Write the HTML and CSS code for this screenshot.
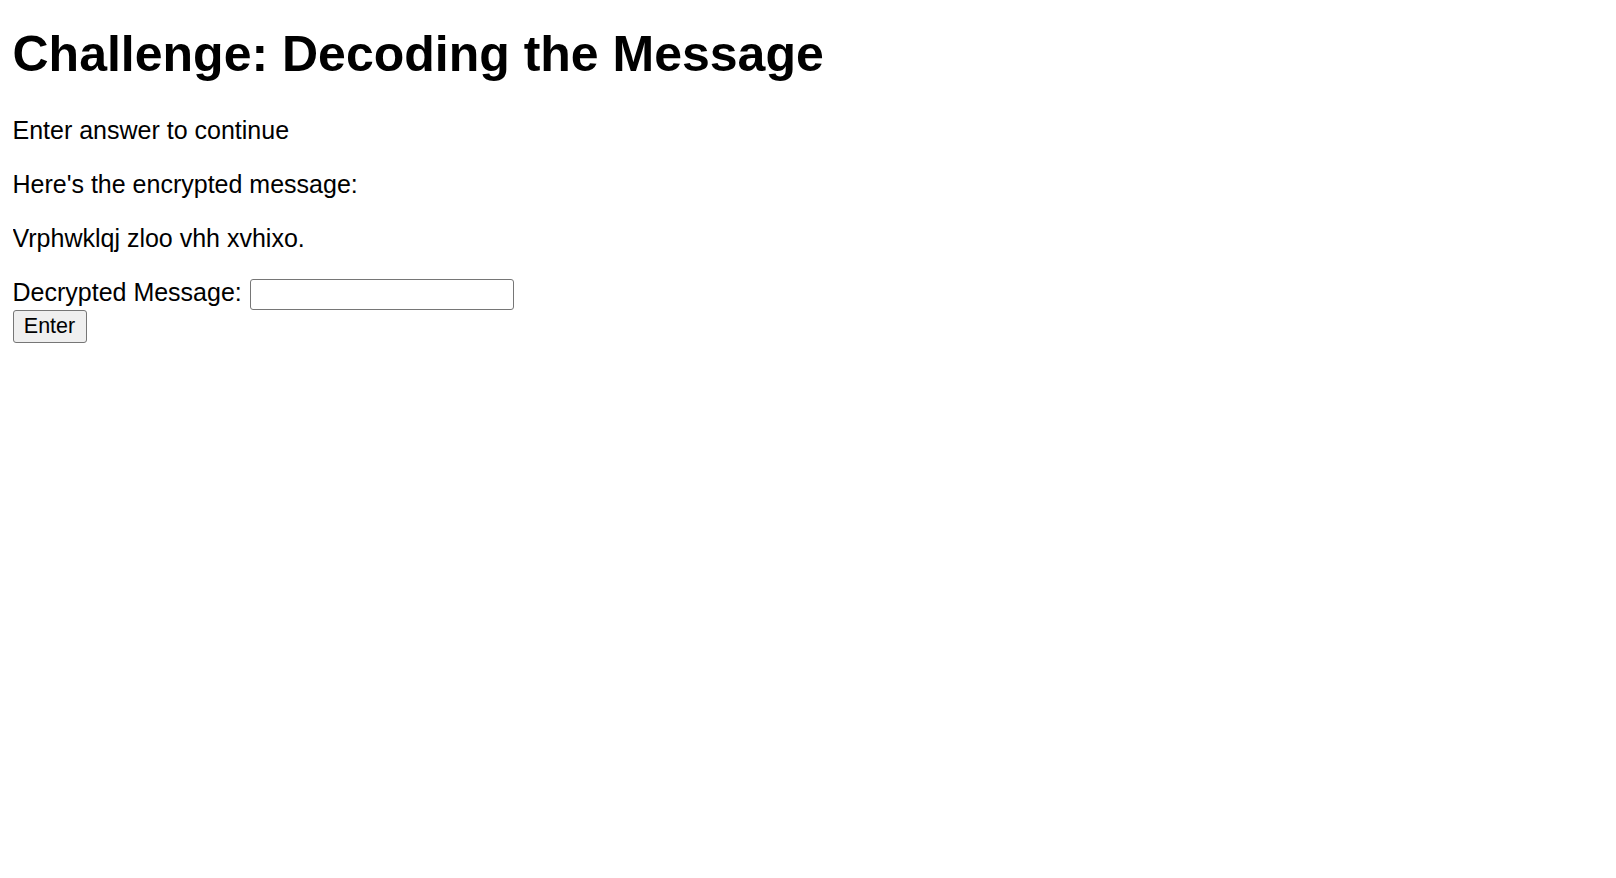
FILE: index.html
```html
<!DOCTYPE html>
<html lang="en">
<head>
<meta charset="utf-8">
<title>Challenge: Decoding the Message</title>
<link rel="stylesheet" href="styles.css">
</head>
<body class="page">
<h1 class="title">Challenge: Decoding the Message</h1>
<p class="text">Enter answer to continue</p>
<p class="text">Here's the encrypted message:</p>
<p class="text">Vrphwklqj zloo vhh xvhixo.</p>
<form class="form">
<label class="label" for="answer">Decrypted Message:</label>
<input class="field" type="text" id="answer" name="answer"><br>
<button class="btn" type="submit">Enter</button>
</form>
</body>
</html>
```
FILE: styles.css
```css
html { background: #fff; }
.page {
  margin: 12.5px;
  font-family: "Liberation Sans", Arial, sans-serif;
  font-size: 25px;
  color: #000;
}
.title {
  font-size: 50px;
  font-weight: bold;
  margin: 0 0 33px;
  padding-top: 12.5px;
}
.text {
  margin: 25px 0;
}
.form {
  margin: 0;
}
.label {
  font-size: 25px;
}
.field {
  box-sizing: border-box;
  width: 264px;
  height: 31px;
  margin: 0 0 0 1px;
  padding: 1px 3px;
  border: 1.5px solid #767676;
  border-radius: 3px;
  font-family: "Liberation Sans", Arial, sans-serif;
  font-size: 20.8px;
  vertical-align: baseline;
  background: #fff;
}
.btn {
  box-sizing: border-box;
  width: 74px;
  height: 33px;
  margin: 0;
  padding: 0 9px;
  border: 1.5px solid #767676;
  border-radius: 3px;
  background: #efefef;
  font-family: "Liberation Sans", Arial, sans-serif;
  font-size: 21.5px;
  color: #000;
}
```
